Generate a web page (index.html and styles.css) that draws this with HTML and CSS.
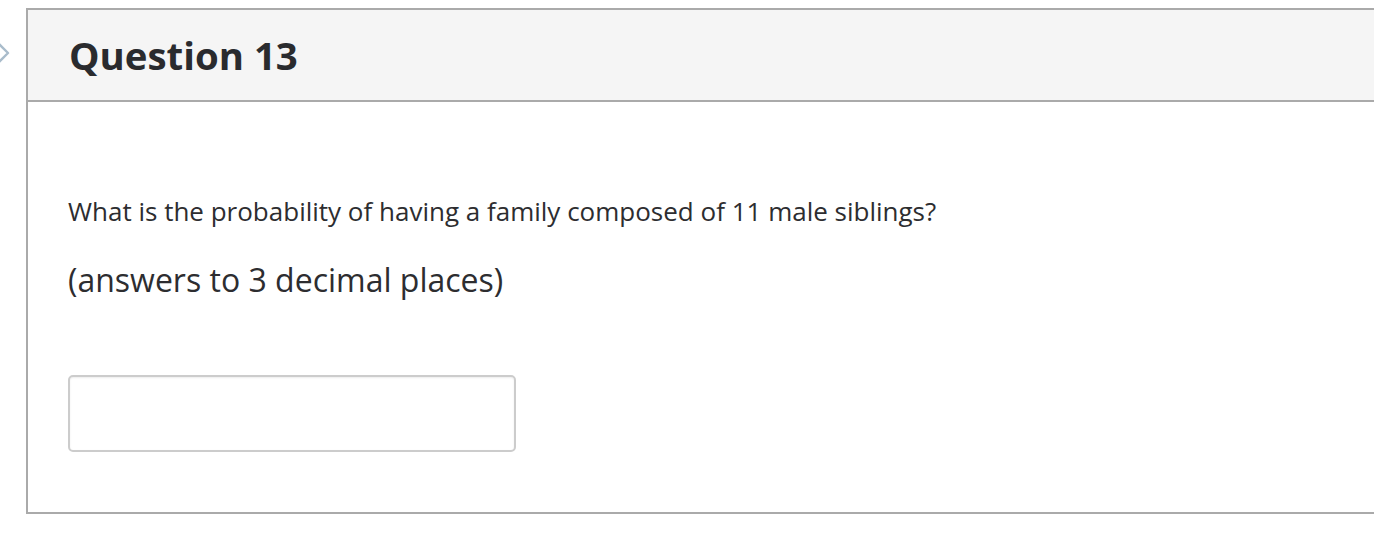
FILE: index.html
```html
<!DOCTYPE html>
<html>
<head>
<meta charset="utf-8">
<link rel="stylesheet" href="styles.css">
</head>
<body>
<div class="page">
  <svg class="marker" width="12" height="34" viewBox="0 0 12 34">
    <path d="M-6 3 L8 17 L-6 31" fill="none" stroke="#a9bccb" stroke-width="2.4" stroke-linejoin="round"/>
  </svg>
  <div class="card">
    <div class="card-header">
      <h2 class="title">Question 13</h2>
    </div>
    <div class="card-body">
      <p class="question">What is the probability of having a family composed of 11 male siblings?</p>
      <p class="hint">(answers to 3 decimal places)</p>
      <input class="answer" type="text">
    </div>
  </div>
</div>
</body>
</html>
```
FILE: styles.css
```css
html, body {
  margin: 0;
  padding: 0;
  background: #ffffff;
}
body {
  font-family: "Open Sans", "Liberation Sans", sans-serif;
  color: #2d3b45;
}
.page {
  position: relative;
  padding: 8px 0 0 26px;
}
.marker {
  position: absolute;
  left: 0;
  top: 36px;
}
.card {
  border: 2px solid #aaaaaa;
  border-right: none;
  width: 1400px;
}
.card-header {
  background: #f5f5f5;
  border-bottom: 2px solid #aaaaaa;
  height: 90px;
  display: flex;
  align-items: center;
  padding-left: 41px;
}
.title {
  margin: 0;
  font-size: 38.4px;
  font-weight: 700;
  color: #2a2b2e;
  line-height: 1;
  position: relative;
  top: 0;
}
.card-body {
  padding: 96px 0 60px 40px;
  height: 254px;
}
.question {
  margin: 0;
  font-size: 26px;
  line-height: 30px;
  color: #2d2d30;
  position: relative;
  top: -2px;
}
.hint {
  margin: 34px 0 0;
  font-size: 32px;
  line-height: 36px;
  color: #2d2d30;
}
.answer {
  display: block;
  box-sizing: border-box;
  margin-top: 77px;
  width: 448px;
  height: 77px;
  border: 2px solid #cccccc;
  border-radius: 5px;
  box-shadow: inset 0 1px 2px rgba(0,0,0,0.08);
  background: #fff;
  outline: none;
}
```
